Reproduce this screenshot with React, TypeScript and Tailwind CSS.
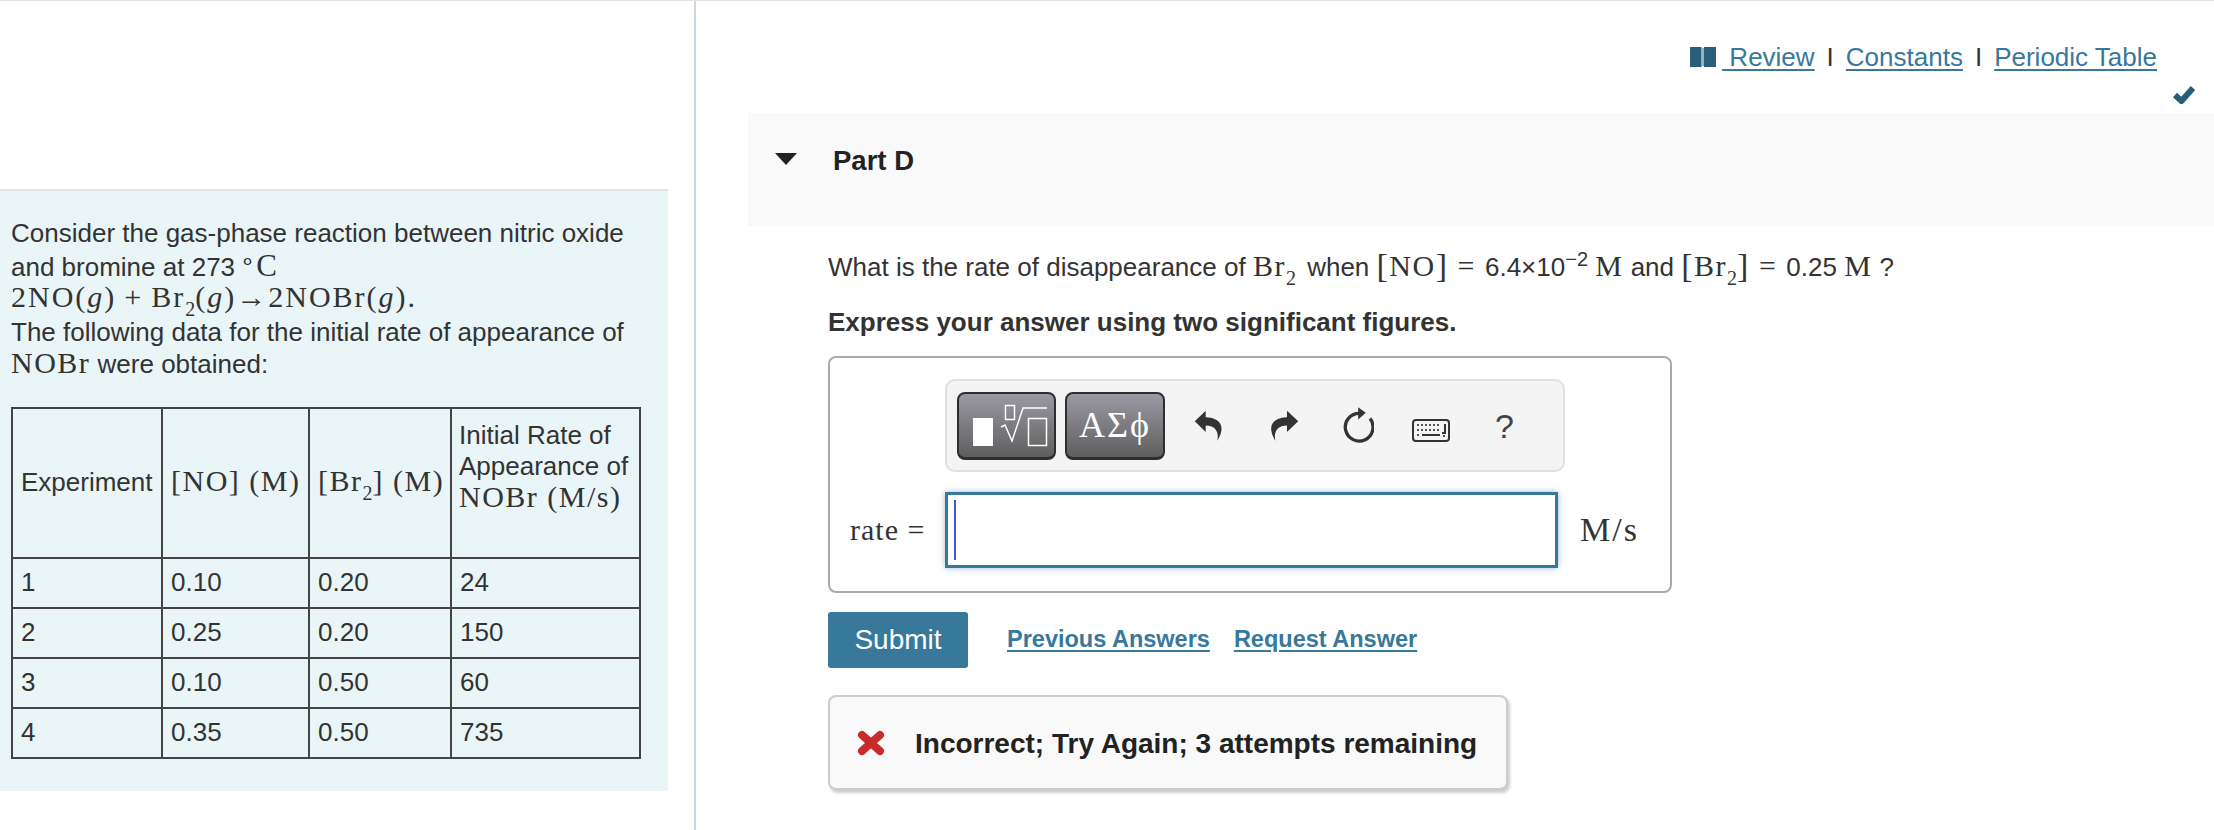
const serif = "font-['Liberation_Serif',serif]"

function M({ children }: { children: React.ReactNode }) {
  return <span className={`${serif} text-[30px] leading-none tracking-[1.5px]`}>{children}</span>
}

function Sub({ children }: { children: React.ReactNode }) {
  return <sub className="text-[20px] leading-none align-[-4px] tracking-normal">{children}</sub>
}

function Tall({ children }: { children: React.ReactNode }) {
  return <span className="text-[34px] font-light leading-none align-[-1px]">{children}</span>
}

const rows = [
  ["1", "0.10", "0.20", "24"],
  ["2", "0.25", "0.20", "150"],
  ["3", "0.10", "0.50", "60"],
  ["4", "0.35", "0.50", "735"],
]

function ReactionPanel() {
  return (
    <div className="w-[668px] h-[602px] bg-[#e9f5f7] border-t-2 border-[#dfe3e3] pt-[26px] text-[26px] leading-[32.5px] text-[#333]">
      <div className="pl-[11px]">
        <p className="h-[32.5px]">Consider the gas-phase reaction between nitric oxide</p>
        <p className="h-[32.5px]">and bromine at 273 <span className={`${serif} text-[31px] leading-none`}><span className="inline-block text-[24px] leading-none -translate-y-[7px] -ml-[2px] mr-[1px]">∘</span>C</span></p>
        <p className="h-[32.5px] tracking-[2px]"><span className={`${serif} text-[30px] leading-none`}>2NO(<i>g</i>)<span className="mx-[8px]">+</span>Br<Sub>2</Sub>(<i>g</i>)→2NOBr(<i>g</i>).</span></p>
        <p className="h-[32.5px] mt-[1px]">The following data for the initial rate of appearance of</p>
        <p className="h-[32.5px]"><M>NOBr</M> were obtained:</p>
      </div>
      <table className="ml-[11px] mt-[26px] w-[628px] table-fixed border-collapse border-2 border-[#444]">
        <colgroup>
          <col className="w-[150px]" />
          <col className="w-[147px]" />
          <col className="w-[142px]" />
          <col className="w-[189px]" />
        </colgroup>
        <thead>
          <tr className="h-[150px]">
            <th className="border-2 border-[#444] px-[8px] font-normal text-left whitespace-nowrap">Experiment</th>
            <th className="border-2 border-[#444] px-[8px] font-normal text-left whitespace-nowrap"><M>[NO] (M)</M></th>
            <th className="border-2 border-[#444] px-[8px] font-normal text-left whitespace-nowrap"><M>[Br<Sub>2</Sub>] (M)</M></th>
            <th className="border-2 border-[#444] pl-[7px] pb-[31px] font-normal text-left leading-[31px]">
              Initial Rate of Appearance of <span className="whitespace-nowrap"><M>NOBr (M/s)</M></span>
            </th>
          </tr>
        </thead>
        <tbody>
          {rows.map((row) => (
            <tr key={row[0]} className="h-[50px]">
              {row.map((cell, i) => (
                <td key={i} className="border-2 border-[#444] px-[8px]">{cell}</td>
              ))}
            </tr>
          ))}
        </tbody>
      </table>
    </div>
  )
}

function EditorToolbar() {
  return (
    <div className="ml-[115px] w-[620px] h-[93px] rounded-[10px] border-2 border-[#e0e0e0] bg-[#f4f4f4] flex items-center pl-[10px] text-[#333]">
      <div className="w-[99px] h-[68px] rounded-[8px] border-2 border-b-[3px] border-[#2e2e2e] bg-gradient-to-b from-[#9b9aa3] to-[#5f5f5f] flex items-center justify-center">
        <svg width="95" height="63" viewBox="2 2 95 63" fill="none">
          <rect x="16" y="26" width="20" height="28" fill="#fff" />
          <rect x="48.500" y="13.500" width="9" height="14" stroke="#fff" strokeWidth="1.500" />
          <path d="M44 35l4-2 7 16 11-33h24" stroke="#fff" strokeWidth="1.500" />
          <rect x="71.500" y="26.500" width="18" height="27" stroke="#fff" strokeWidth="1.500" />
        </svg>
      </div>
      <div className={`ml-[9px] w-[100px] h-[68px] rounded-[8px] border-2 border-b-[3px] border-[#2e2e2e] bg-gradient-to-b from-[#9b9aa3] to-[#5f5f5f] flex items-center justify-center text-white text-[36px] tracking-[2px] ${serif}`}>
        ΑΣϕ
      </div>
      <svg className="ml-[29px]" width="28" height="33" viewBox="40 60 84 100">
        <path d="M42 97L75 65V85C105 85 128 100 122 128C120 140 114 150 110 156C116 130 105 110 75 110V130Z" fill="#333" />
      </svg>
      <svg className="ml-[49px]" width="28" height="33" viewBox="272 60 84 100">
        <path d="M354 97L320 65V85C290 85 267 100 273 128C275 140 281 150 285 156C279 130 290 110 320 110V130Z" fill="#333" />
      </svg>
      <svg className="ml-[42px] -mt-[2px]" width="33" height="38" viewBox="30 55 100 113" fill="none">
        <path d="M85 76A42 42 0 1 0 118 92" stroke="#333" strokeWidth="10" />
        <path d="M82 58L105 74L82 95Z" fill="#333" />
      </svg>
      <svg className="ml-[38px] mt-[9px]" width="38" height="23" viewBox="0 0 38 23" fill="none">
        <rect x="1" y="1" width="36" height="21" rx="3" stroke="#333" strokeWidth="2" />
        <path d="M5 6h24M5 11h24" stroke="#555" strokeWidth="2" strokeDasharray="2 2" />
        <path d="M10 16h18" stroke="#333" strokeWidth="2" />
        <path d="M33 5v9h-3" stroke="#333" strokeWidth="2" />
        <path d="M5 16h2M31 17h2" stroke="#555" strokeWidth="2" />
      </svg>
      <span className="ml-[45px] text-[34px] leading-none text-[#444]">?</span>
    </div>
  )
}

function AnswerBox() {
  return (
    <div className="ml-[132px] mt-[18px] w-[844px] h-[237px] rounded-[8px] border-2 border-[#aaa] pt-[21px]">
      <EditorToolbar />
      <div className="mt-[20px] flex items-center">
        <span className={`ml-[20px] -mt-[2px] w-[95px] text-[30px] tracking-[1px] whitespace-nowrap ${serif} text-[#333]`}>rate =</span>
        <div className="w-[613px] h-[76px] border-[3px] border-[#37789b] shadow-[0_0_6px_#37789b80] bg-white py-[5px] pl-[6px]">
          <div className="w-[2px] h-full bg-[#3b5bd0]" />
        </div>
        <span className={`ml-[22px] -mt-[2px] text-[34px] tracking-[2px] ${serif} text-[#333]`}>M/s</span>
      </div>
    </div>
  )
}

export default function App() {
  return (
    <div className="w-[2214px] h-[830px] overflow-hidden bg-white border-t border-[#e5e5e5] font-['Liberation_Sans',sans-serif] flex">
      <div className="w-[696px] shrink-0 border-r-2 border-[#c9d6df] pt-[188px]">
        <ReactionPanel />
      </div>
      <div className="flex-1">
        <div className="h-[112px] relative">
          <div className="pt-[40px] pr-[57px] flex justify-end items-center text-[26px] leading-[32px] text-[#333]">
            <svg width="26" height="20" viewBox="0 0 26 20" className="mr-[6px]">
              <path d="M0 0h11.500v20H0zM14 0h12v20H14z" fill="#285e78" />
              <path d="M11.500 1H14v18h-2.500z" fill="#8fb4c4" />
            </svg>
            <a className="text-[#37789b] underline decoration-2 underline-offset-[3px] whitespace-pre"> Review</a>
            <span className="mx-[12px]">I</span>
            <a className="text-[#37789b] underline decoration-2 underline-offset-[3px]">Constants</a>
            <span className="mx-[12px]">I</span>
            <a className="text-[#37789b] underline decoration-2 underline-offset-[3px]">Periodic Table</a>
          </div>
          <svg className="absolute right-[18px] top-[84px]" width="24" height="19" viewBox="0 0 24 19" fill="none">
            <path d="M3 10l6.500 6L21 3" stroke="#285e78" strokeWidth="6" strokeLinejoin="round" />
          </svg>
        </div>
        <div className="ml-[52px] h-[113px] bg-[#f9f9f9] flex items-start pt-[27px]">
          <svg width="22" height="12" viewBox="0 0 22 12" className="ml-[27px] mt-[13px]">
            <path d="M0 0h22L11 12z" fill="#222" />
          </svg>
          <span className="ml-[36px] text-[27.500px] font-bold text-[#222]">Part D</span>
        </div>
        <p className="ml-[132px] mt-[22px] text-[26px] leading-[38px] text-[#333] whitespace-nowrap">
          What is the rate of disappearance of <M>Br<Sub>2</Sub><span className="mr-[4px]" /></M> when <M><Tall>[</Tall>NO<Tall>]</Tall><span className="mx-[9px]">=</span></M>6.4×10<sup className="text-[20px]">−2</sup> <M>M</M> and <M><Tall>[</Tall>Br<Sub>2</Sub><Tall>]</Tall><span className="mx-[9px]">=</span></M>0.25 <M>M</M> ?
        </p>
        <p className="ml-[132px] mt-[20px] text-[26px] leading-[32px] font-bold text-[#333]">Express your answer using two significant figures.</p>
        <AnswerBox />
        <div className="ml-[132px] mt-[19px] flex items-center">
          <button className="w-[140px] h-[56px] rounded-[3px] bg-[#37789b] text-white text-[28px]">Submit</button>
          <a className="ml-[39px] text-[23.500px] font-bold text-[#37789b] underline decoration-2 underline-offset-[3px]">Previous Answers</a>
          <a className="ml-[24px] text-[23.500px] font-bold text-[#37789b] underline decoration-2 underline-offset-[3px]">Request Answer</a>
        </div>
        <div className="ml-[132px] mt-[27px] w-[680px] h-[95px] rounded-[8px] border-2 border-[#ccc] bg-[#f9f9f9] shadow-[2px_3px_3px_#00000033] flex items-center pl-[27px]">
          <svg width="28" height="26" viewBox="0 0 28 26" fill="none">
            <path d="M5 5L23 21M23 5L5 21" stroke="#c92a2a" strokeWidth="8" strokeLinecap="round" />
          </svg>
          <span className="ml-[30px] mt-[3px] text-[28px] font-bold text-[#222] whitespace-nowrap">Incorrect; Try Again; 3 attempts remaining</span>
        </div>
      </div>
    </div>
  )
}
